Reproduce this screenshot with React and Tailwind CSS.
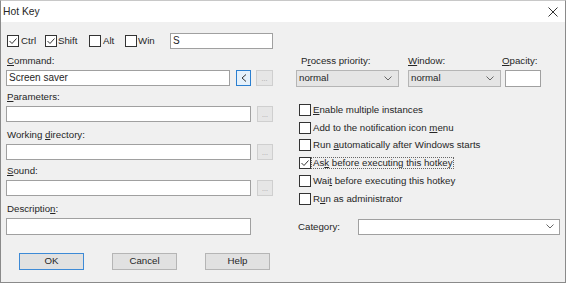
import React from "react";

const font = { fontFamily: '"Liberation Sans", Arial, sans-serif' };

function Check({ checked }) {
  return (
    <span className="w-[12px] h-[12px] shrink-0 border border-[#333333] bg-white flex items-center justify-center">
      {checked && (
        <svg width="10" height="10" viewBox="0 0 10 10">
          <polyline points="1.5,5 4,7.5 8.5,2.5" fill="none" stroke="#333" strokeWidth="1" />
        </svg>
      )}
    </span>
  );
}

function U({ children }) {
  return <span className="underline underline-offset-[1px]">{children}</span>;
}

function Input({ w, h = "h-[16px]", children }) {
  return (
    <div className={`${w} ${h} shrink-0 border border-[#a0a0a0] bg-white flex items-center pl-[2px] text-[10px] leading-none`}>
      {children}
    </div>
  );
}

function Dots() {
  return (
    <div className="w-[16px] h-[16px] ml-[6px] shrink-0 border border-[#cfcfcf] bg-[#e6e6e6] flex items-end justify-center pb-[3px] text-[7px] leading-none text-[#a0a0a0]">
      ...
    </div>
  );
}

function Chevron() {
  return (
    <svg width="8" height="5" viewBox="0 0 8 5" className="shrink-0">
      <polyline points="0.5,0.5 4,4 7.5,0.5" fill="none" stroke="#666" strokeWidth="1" />
    </svg>
  );
}

function Label({ children, mt }) {
  return <div className={`${mt} h-[14px] leading-[14px] text-[9.7px] pl-[1px]`}>{children}</div>;
}

function Btn({ children, ok }) {
  return (
    <div
      className={`w-[65px] h-[17px] flex items-center justify-center text-[9.7px] bg-[#e1e1e1] border ${
        ok ? "border-[#3d8ad6]" : "border-[#b5b5b5]"
      }`}
    >
      {children}
    </div>
  );
}

function CbRow({ checked, children, focus }) {
  return (
    <div className="h-[17.8px] flex items-center gap-[1px]">
      <Check checked={checked} />
      <span className={`text-[9.7px] leading-[10px] px-[1px] ${focus ? "outline outline-1 outline-dotted outline-[#666]" : ""}`}>
        {children}
      </span>
    </div>
  );
}

export default function App() {
  return (
    <div style={font} className="w-[567px] h-[284px] bg-white text-[#262626]">
      <div className="w-[566px] h-[283px] border border-t-[#c8c8c8] border-x-[#8a8a8a] border-b-[#8a8a8a] bg-[#f0f0f0] flex flex-col">
        {/* title bar */}
        <div className="h-[21px] bg-white flex items-center justify-between pl-[2px] pr-[7px] shrink-0">
          <span className="text-[10.3px]">Hot Key</span>
          <svg width="10" height="10" viewBox="0 0 10 10">
            <path d="M0.5 0.5 L9.5 9.5 M9.5 0.5 L0.5 9.5" stroke="#333" strokeWidth="1" />
          </svg>
        </div>

        <div className="flex pl-[5px]">
          {/* left column */}
          <div className="w-[267px] flex flex-col">
            <div className="mt-[11px] h-[16px] flex items-center pl-[1px]">
              <div className="w-[38px] flex items-center gap-[2px]">
                <Check checked />
                <span className="text-[9.7px]">Ctrl</span>
              </div>
              <div className="w-[44px] flex items-center gap-[1px]">
                <Check checked />
                <span className="text-[9.7px]">Shift</span>
              </div>
              <div className="w-[36px] flex items-center gap-[2px]">
                <Check />
                <span className="text-[9.7px]">Alt</span>
              </div>
              <div className="w-[45px] flex items-center gap-[1px]">
                <Check />
                <span className="text-[9.7px]">Win</span>
              </div>
              <Input w="w-[103px]">S</Input>
            </div>

            <Label mt="mt-[5px]">
              <U>C</U>ommand:
            </Label>
            <div className="mt-[2px] flex items-center">
              <Input w="w-[224px]">Screen saver</Input>
              <div className="w-[15px] h-[16px] ml-[6px] shrink-0 border border-[#2b7fd0] bg-[#e5f1fb] flex items-center justify-center">
                <svg width="6" height="8" viewBox="0 0 6 8">
                  <polyline points="5,0.5 1,4 5,7.5" fill="none" stroke="#333" strokeWidth="1" />
                </svg>
              </div>
              <div className="w-[17px] h-[16px] ml-[5px] shrink-0 border border-[#cfcfcf] bg-[#e6e6e6] flex items-end justify-center pb-[3px] text-[7px] leading-none text-[#a0a0a0]">
                ...
              </div>
            </div>

            <Label mt="mt-[4px]">
              <U>P</U>arameters:
            </Label>
            <div className="mt-[2px] flex items-center">
              <Input w="w-[245px]" />
              <Dots />
            </div>

            <Label mt="mt-[6px]">
              Working <U>d</U>irectory:
            </Label>
            <div className="mt-[2px] flex items-center">
              <Input w="w-[245px]" />
              <Dots />
            </div>

            <Label mt="mt-[4px]">
              <U>S</U>ound:
            </Label>
            <div className="mt-[2px] flex items-center">
              <Input w="w-[245px]" />
              <Dots />
            </div>

            <Label mt="mt-[6px]">
              Descriptio<U>n</U>:
            </Label>
            <div className="mt-[2px] flex items-center">
              <Input w="w-[245px]" h="h-[17px]" />
            </div>

            <div className="mt-[18px] pl-[13px] flex gap-[28px]">
              <Btn ok>OK</Btn>
              <Btn>Cancel</Btn>
              <Btn>Help</Btn>
            </div>
          </div>

          {/* right column */}
          <div className="ml-[23px] w-[265px] flex flex-col">
            <div className="mt-[32px] h-[14px] flex text-[9.7px] leading-[14px]">
              <div className="w-[112px] pl-[5px]">
                P<U>r</U>ocess priority:
              </div>
              <div className="w-[94px]">
                <U>W</U>indow:
              </div>
              <div>
                <U>O</U>pacity:
              </div>
            </div>
            <div className="mt-[2px] flex items-center">
              <div className="w-[103px] h-[17px] border border-[#b5b5b5] bg-[#e5e5e5] flex items-center justify-between pl-[2px] pr-[6px] text-[9.7px]">
                <span>normal</span>
                <Chevron />
              </div>
              <div className="ml-[9px] w-[93px] h-[17px] border border-[#b5b5b5] bg-[#e5e5e5] flex items-center justify-between pl-[2px] pr-[6px] text-[9.7px]">
                <span>normal</span>
                <Chevron />
              </div>
              <div className="ml-[4px] w-[36px] h-[17px] border border-[#a0a0a0] bg-white" />
            </div>

            <div className="mt-[14px] pl-[3px] flex flex-col">
              <CbRow>
                <U>E</U>nable multiple instances
              </CbRow>
              <CbRow>
                Add to the notification icon <U>m</U>enu
              </CbRow>
              <CbRow>
                Run <U>a</U>utomatically after Windows starts
              </CbRow>
              <CbRow checked focus>
                As<U>k</U> before executing this hotkey
              </CbRow>
              <CbRow>
                Wai<U>t</U> before executing this hotkey
              </CbRow>
              <CbRow>
                R<U>u</U>n as administrator
              </CbRow>
            </div>

            <div className="mt-[11px] flex items-center">
              <div className="w-[62px] pl-[2px] text-[9.7px]">Category:</div>
              <div className="w-[202px] h-[16px] border border-[#a0a0a0] bg-white flex items-center justify-end pr-[5px]">
                <Chevron />
              </div>
            </div>
          </div>
        </div>
      </div>
    </div>
  );
}
